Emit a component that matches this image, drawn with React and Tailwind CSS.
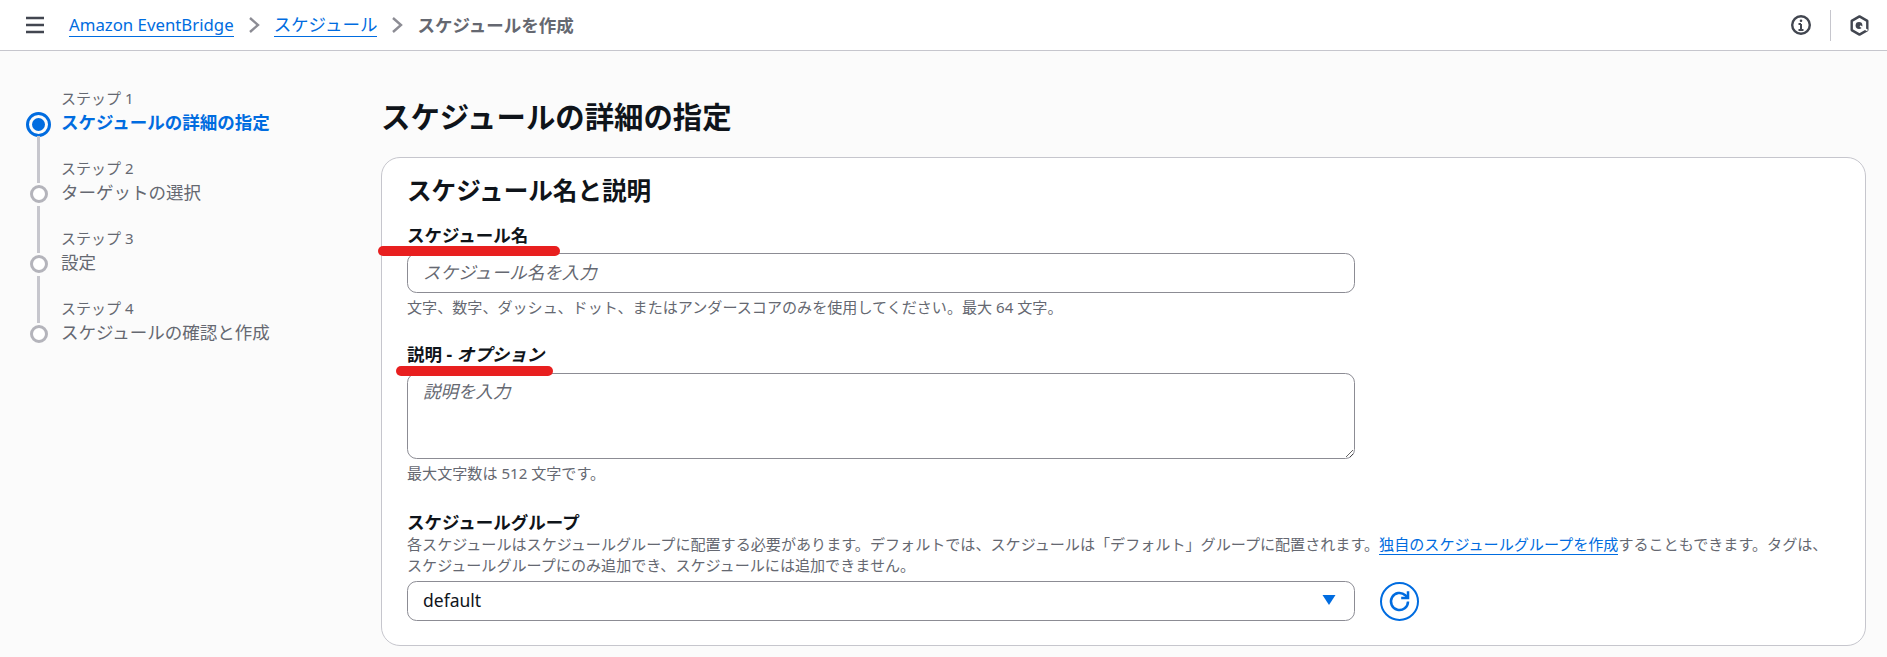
const steps = ["スケジュールの詳細の指定", "ターゲットの選択", "設定", "スケジュールの確認と作成"];

function Stepper() {
  return (
    <div className="grid grid-cols-[25px_1fr] gap-x-[10px] w-[340px]">
      {steps.map((name, i) => (
        <div key={i} className="contents">
          <div className={i === 0 ? "h-[22px]" : "h-[44px] flex justify-center"}>
            {i > 0 && <div className="w-[3px] h-[47px] -mt-px -mb-[2px] bg-[#c6c6cd]" />}
          </div>
          <div className={(i === 0 ? "h-[22px]" : "h-[44px]") + " flex items-end pb-[3px] text-[15px] leading-[19px] text-[#656871]"}>
            ステップ {i + 1}
          </div>
          <div className="h-[26px] flex items-center justify-center">
            {i === 0 ? (
              <div className="w-[25px] h-[25px] rounded-full border-[3px] border-[#006ce0] flex items-center justify-center">
                <div className="w-[13px] h-[13px] rounded-full bg-[#006ce0]" />
              </div>
            ) : (
              <div className="w-[18px] h-[18px] rounded-full border-[3px] border-[#b4b4bb] bg-white" />
            )}
          </div>
          <div className={"h-[26px] pb-[3px] flex items-center text-[17.5px] " + (i === 0 ? "font-bold text-[#006ce0]" : "text-[#656871]")}>
            {name}
          </div>
        </div>
      ))}
    </div>
  );
}

function Header() {
  return (
    <header className="h-[51px] bg-white border-b border-[#c6c6cd] flex items-center pl-[25px] pr-[18px]">
      <svg width="20" height="18" viewBox="0 0 20 18" className="text-[#424650]">
        <path d="M1 2h18M1 9h18M1 16h18" stroke="currentColor" strokeWidth="2.4" fill="none" />
      </svg>
      <a className="ml-[24px] text-[16.8px] text-[#006ce0] border-b border-[#006ce0] leading-[23px]">Amazon EventBridge</a>
      <svg width="14" height="18" viewBox="0 0 14 18" className="mx-[13px] text-[#8c8c94]">
        <path d="M3 2l8 7-8 7" stroke="currentColor" strokeWidth="2.4" fill="none" />
      </svg>
      <a className="text-[#006ce0] border-b border-[#006ce0] leading-[23px]">スケジュール</a>
      <svg width="14" height="18" viewBox="0 0 14 18" className="mx-[13px] text-[#8c8c94]">
        <path d="M3 2l8 7-8 7" stroke="currentColor" strokeWidth="2.4" fill="none" />
      </svg>
      <span className="font-semibold text-[#656871]">スケジュールを作成</span>
      <div className="ml-auto flex items-center">
        <svg width="20" height="20" viewBox="0 0 20 20" className="text-[#424650]">
          <circle cx="10" cy="10" r="8.8" stroke="currentColor" strokeWidth="2.4" fill="none" />
          <path d="M10 9v6M7.5 15h5M7.5 9H10" stroke="currentColor" strokeWidth="2" fill="none" />
          <circle cx="10" cy="5.8" r="1.3" fill="currentColor" />
        </svg>
        <div className="w-px h-[31px] bg-[#c6c6cd] ml-[19px] mr-[19px]" />
        <svg width="19" height="21" viewBox="0 0 19 21" className="text-[#424650]">
          <path d="M9.5 1.4l7.8 4.5v9.2l-7.8 4.5-7.8-4.5V5.9z" stroke="currentColor" strokeWidth="2.4" fill="none" strokeLinejoin="round" />
          <circle cx="9" cy="10.5" r="3.4" fill="currentColor" />
          <path d="M10 11l7.5 4.5" stroke="#ffffff" strokeWidth="1.6" fill="none" />
        </svg>
      </div>
    </header>
  );
}

const fieldClass =
  "w-[948px] rounded-[9.6px] border border-[#8c8c94] bg-white px-[15px] text-[17.5px] text-[#0f141a] placeholder:italic placeholder:text-[#656871] outline-none";

function RedMark({ className }) {
  return <div className={"absolute h-[10px] rounded-full bg-[#e81f1f] " + className} />;
}

export default function App() {
  return (
    <div
      className="h-[657px] overflow-hidden bg-[#fbfbfb] text-[17.5px] text-[#0f141a]"
      style={{ fontFamily: '"Noto Sans", "Noto Sans CJK JP", sans-serif' }}
    >
      <Header />
      <div className="flex">
        <aside className="w-[381px] shrink-0 pl-[26px] pt-[38px]">
          <Stepper />
        </aside>
        <main className="flex-1 pr-[21px] pt-[48px]">
          <h1 className="text-[29.4px] leading-[36px] font-bold">スケジュールの詳細の指定</h1>
          <section className="mt-[22px] rounded-[19px] border border-[#c6c6cd] bg-white pl-[25px] pr-[24px] pt-[17px] pb-[24px]">
            <h2 className="text-[24.6px] leading-[32px] font-bold">スケジュール名と説明</h2>
            <div className="relative mt-[16px]">
              <label className="block mb-[6px] text-[17.5px] leading-[24px] font-bold">スケジュール名</label>
              <RedMark className="left-[-29px] top-[23px] w-[182px]" />
              <input className={fieldClass + " block h-[40px] pb-[2px]"} placeholder="スケジュール名を入力" />
              <p className="mt-[4px] text-[15.08px] leading-[21px] text-[#656871]">
                文字、数字、ダッシュ、ドット、またはアンダースコアのみを使用してください。最大 64 文字。
              </p>
            </div>
            <div className="relative mt-[24px]">
              <label className="block mb-[7px] text-[17.5px] leading-[24px] font-bold">
                説明 - <span className="italic">オプション</span>
              </label>
              <RedMark className="left-[-11px] top-[24px] w-[157px]" />
              <textarea className={fieldClass + " block h-[86px] py-[4px] resize"} placeholder="説明を入力" />
              <p className="mt-[4px] text-[15.08px] leading-[21px] text-[#656871]">最大文字数は 512 文字です。</p>
            </div>
            <div className="mt-[26px]">
              <label className="block text-[17.5px] leading-[24px] font-bold">スケジュールグループ</label>
              <p className="text-[15.08px] leading-[21px] text-[#656871]">
                各スケジュールはスケジュールグループに配置する必要があります。デフォルトでは、スケジュールは「デフォルト」グループに配置されます。
                <a className="text-[#006ce0] border-b border-[#006ce0]">独自のスケジュールグループを作成</a>
                することもできます。タグは、
                <br />
                スケジュールグループにのみ追加でき、スケジュールには追加できません。
              </p>
              <div className="flex items-center mt-[5px]">
                <button className="w-[948px] h-[40px] rounded-[9.6px] border border-[#8c8c94] bg-white pl-[15px] pr-[15px] pb-[2px] flex items-center justify-between">
                  <span>default</span>
                  <svg width="16" height="12" viewBox="0 0 16 12" className="text-[#006ce0] mr-[2px]">
                    <path d="M1.5 1h13L8 11z" fill="currentColor" />
                  </svg>
                </button>
                <button className="ml-[25px] w-[39px] h-[39px] rounded-full border-[2.4px] border-[#006ce0] flex items-center justify-center">
                  <svg width="25" height="25" viewBox="0 0 22 22" className="text-[#006ce0]">
                    <path d="M18.5 11a7.5 7.5 0 1 1-2.4-5.5L18.5 8" stroke="currentColor" strokeWidth="2.2" fill="none" />
                    <path d="M18.5 2v6h-6" stroke="currentColor" strokeWidth="2.2" fill="none" />
                  </svg>
                </button>
              </div>
            </div>
          </section>
        </main>
      </div>
    </div>
  );
}
